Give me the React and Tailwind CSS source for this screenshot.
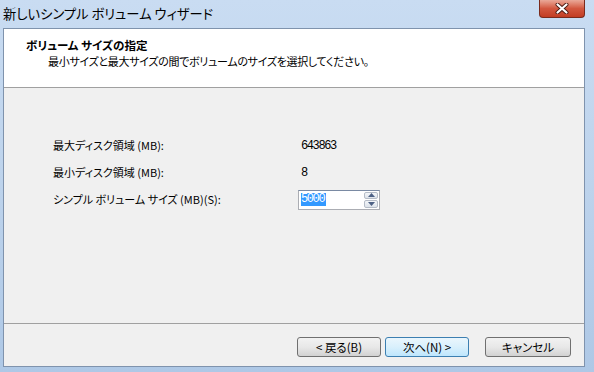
const rows = [
  { label: "最大ディスク領域 (MB):", value: "643863" },
  { label: "最小ディスク領域 (MB):", value: "8" },
];

const WinButton = ({ children, primary, className = "" }) => (
  <button
    className={`h-[20px] rounded-[3px] border text-[11.5px] leading-[16px] ${
      primary
        ? "border-[#3c7fb1] bg-linear-to-b from-[#eaf6fd] via-[#d9f0fc] to-[#bee6fd]"
        : "border-[#707070] bg-linear-to-b from-[#f2f2f2] via-[#e8e8e8] to-[#d2d2d2]"
    } ${className}`}>
    {children}
  </button>
);

export default function App() {
  return (
    <div className="w-[594px] h-[372px] overflow-hidden flex flex-col bg-linear-to-b from-[#c9dcf2] via-[#bdd3ec] to-[#aec8e6] text-black font-['Noto_Sans_CJK_JP',sans-serif] [font-feature-settings:'palt']">
      {/* タイトルバー */}
      <div className="h-[28px] shrink-0 flex items-start justify-between pl-[3px] pr-[9px]">
        <span className="mt-[5px] text-[13.3px] leading-[18px]">
          新しいシンプル ボリューム ウィザード
        </span>
        <button className="w-[46px] h-[18px] flex items-center justify-center rounded-b-[4px] border border-t-0 border-[#7a2a1c] bg-linear-to-b from-[#e9a898] via-[#d2573f] to-[#c23c22]">
          <svg width="14" height="11" viewBox="0 0 14 11">
            <path d="M2.5 1.5 L11.5 9.5 M11.5 1.5 L2.5 9.5" stroke="#4a1a12" strokeWidth="4" strokeLinecap="round" />
            <path d="M2.5 1.5 L11.5 9.5 M11.5 1.5 L2.5 9.5" stroke="#ffffff" strokeWidth="2.2" strokeLinecap="round" />
          </svg>
        </button>
      </div>

      {/* 本体 */}
      <div className="flex-1 ml-[3px] mr-[9px] mb-[5px] border border-[#7f93ad] bg-[#f0f0f0] flex flex-col">
        <div className="h-[59px] shrink-0 bg-white border-b border-[#a0a0a0] pl-[22px] pt-[8px] text-[11px] leading-[16px]">
          <div className="font-bold text-[11.5px]">ボリューム サイズの指定</div>
          <div className="pl-[22px] tracking-[-0.3px]">
            最小サイズと最大サイズの間でボリュームのサイズを選択してください。
          </div>
        </div>

        <div className="flex-1 pt-[44px] pl-[49px] text-[11px]">
          {rows.map((r) => (
            <div key={r.label} className="h-[27px] flex items-center">
              <span className="w-[248px]">{r.label}</span>
              <span className="font-['Liberation_Mono',monospace] text-[12px] tracking-[-1.4px]">
                {r.value}
              </span>
            </div>
          ))}
          <div className="h-[27px] flex items-center">
            <span className="w-[245px]">シンプル ボリューム サイズ (MB)(S):</span>
            <div className="w-[82px] h-[20px] flex items-stretch border border-[#abadb3] border-t-[#7a8aa3] bg-white">
              <div className="flex-1 flex items-center pl-[2px]">
                <span className="bg-[#3399ff] text-white font-['Liberation_Mono',monospace] text-[12px] tracking-[-1.4px] leading-[13px] pr-[2px]">
                  5000
                </span>
              </div>
              <div className="w-[16px] flex flex-col gap-[1px] p-[1px]">
                <div className="flex-1 flex items-center justify-center rounded-[2px] border border-[#b5bcc7] bg-linear-to-b from-[#f4f6f9] to-[#dde3ea]">
                  <svg width="7" height="4" viewBox="0 0 7 4">
                    <path d="M0 4 L3.5 0 L7 4 Z" fill="#4d6185" />
                  </svg>
                </div>
                <div className="flex-1 flex items-center justify-center rounded-[2px] border border-[#b5bcc7] bg-linear-to-b from-[#f4f6f9] to-[#dde3ea]">
                  <svg width="7" height="4" viewBox="0 0 7 4">
                    <path d="M0 0 L3.5 4 L7 0 Z" fill="#4d6185" />
                  </svg>
                </div>
              </div>
            </div>
          </div>
        </div>

        <div className="h-[43px] shrink-0 border-t border-[#a0a0a0] flex justify-end items-start pt-[13px] pr-[13px]">
          <WinButton className="w-[84px]">&lt; 戻る(B)</WinButton>
          <WinButton primary className="w-[84px] ml-[4px]">
            次へ(N) &gt;
          </WinButton>
          <WinButton className="w-[86px] ml-[16px]">キャンセル</WinButton>
        </div>
      </div>
    </div>
  );
}
